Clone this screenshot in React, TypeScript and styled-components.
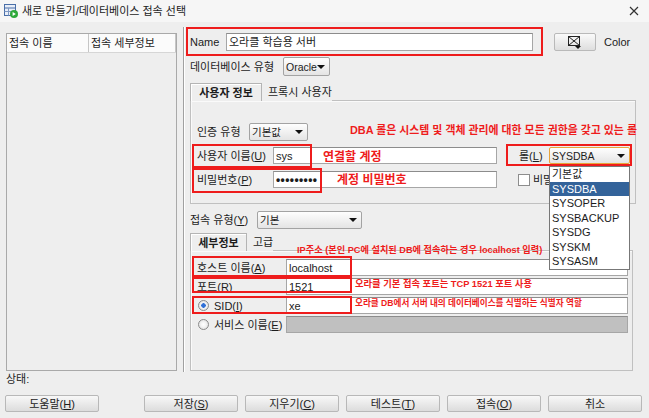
import styled, { createGlobalStyle } from "styled-components";

const FONT = `"Liberation Sans", "Noto Sans CJK KR", sans-serif`;
const RED = "#ee1c1c";

const GlobalStyle = createGlobalStyle`
  html, body {
    margin: 0;
    padding: 0;
    background: #eeeeee;
  }
  body {
    font-family: ${FONT};
    font-size: 11px;
    color: #1c1c1c;
  }
  * {
    box-sizing: border-box;
  }
`;

const Window = styled.div`
  position: relative;
  width: 649px;
  height: 418px;
  overflow: hidden;
  background: #eeeeee;
  display: flex;
  flex-direction: column;
`;

const TitleBar = styled.div`
  height: 22px;
  display: flex;
  align-items: center;
  padding: 0 10px 0 4px;
  background: #f6f6f6;
`;

const TitleText = styled.span`
  margin-left: 4px;
  line-height: 12px;
  flex: 1;
`;

const Body = styled.div`
  display: flex;
  height: 350px;
`;

const LeftCol = styled.div`
  width: 183px;
  padding: 11px 6px 1px 6px;
  display: flex;
`;

const ConnTable = styled.div`
  flex: 1;
  border: 1px solid #a9a9a9;
  background: #eeeeee;
`;

const TableHead = styled.div`
  height: 19px;
  display: grid;
  grid-template-columns: 82px 1fr;
  background: #fbfbfb;
  border-bottom: 1px solid #d6d6d6;
`;

const HeadCell = styled.div`
  display: flex;
  align-items: center;
  padding-left: 2px;
  border-right: 1px solid #c6c6c6;
  line-height: 12px;
`;

const Separator = styled.div`
  width: 2px;
  margin-top: 5px;
  border-left: 1px solid #a0a0a0;
  border-right: 1px solid #ffffff;
`;

const RightCol = styled.div`
  flex: 1;
  padding: 5px 0 0 1px;
  display: flex;
  flex-direction: column;
`;

const NameRow = styled.div`
  display: flex;
  align-items: center;
`;

const NameBox = styled.div`
  width: 357px;
  height: 29px;
  border: 2px solid ${RED};
  display: flex;
  align-items: center;
  padding-left: 2px;
`;

const Label = styled.span<{ $w?: number }>`
  width: ${(p) => (p.$w ? `${p.$w}px` : "auto")};
  flex-shrink: 0;
  line-height: 12px;
  white-space: nowrap;
`;

const TextInput = styled.div<{ $w: number; $h?: number; $disabled?: boolean }>`
  width: ${(p) => p.$w}px;
  height: ${(p) => p.$h ?? 17}px;
  background: ${(p) => (p.$disabled ? "#c0c0c0" : "#ffffff")};
  border: 1px solid #a6a6a6;
  border-top-color: #8c8c8c;
  display: flex;
  align-items: center;
  padding-left: 2px;
  line-height: 12px;
  font-size: 11px;
  white-space: nowrap;
  overflow: hidden;
`;

const ColorButton = styled.div`
  width: 42px;
  height: 18px;
  margin-left: 11px;
  border: 1px solid #b9b9b9;
  border-radius: 2px;
  background: linear-gradient(#fafafa, #dedede);
  display: flex;
  align-items: center;
  justify-content: center;
`;

const ColorText = styled.span`
  margin-left: 8px;
  line-height: 12px;
`;

const FieldRow = styled.div<{ $mt: number; $h?: number; $pl?: number }>`
  display: flex;
  align-items: center;
  margin-top: ${(p) => p.$mt}px;
  height: ${(p) => p.$h ?? 18}px;
  padding-left: ${(p) => p.$pl ?? 0}px;
`;

const Select = styled.div<{ $w: number; $h?: number; $focus?: boolean }>`
  position: relative;
  width: ${(p) => p.$w}px;
  height: ${(p) => p.$h ?? 18}px;
  border: 1px solid ${(p) => (p.$focus ? "#e8a43a" : "#a3a3a3")};
  border-radius: 2px;
  background: linear-gradient(#fefefe, #e4e4e4);
  display: flex;
  align-items: center;
  padding-left: 2px;
  line-height: 12px;
  font-size: 10.5px;

  &::after {
    content: "";
    position: absolute;
    right: 4px;
    top: 50%;
    margin-top: -2px;
    border-left: 4px solid transparent;
    border-right: 4px solid transparent;
    border-top: 4px solid #111;
  }
`;

const TabStrip = styled.div<{ $mt: number }>`
  display: flex;
  align-items: flex-end;
  height: 18px;
  margin-top: ${(p) => p.$mt}px;
  padding-left: 4px;
`;

const Tab = styled.div<{ $active?: boolean; $w?: number }>`
  height: 18px;
  width: ${(p) => (p.$w ? `${p.$w}px` : "auto")};
  display: flex;
  align-items: center;
  justify-content: ${(p) => (p.$active ? "center" : "flex-start")};
  padding-left: ${(p) => (p.$active ? 0 : 6)}px;
  font-weight: ${(p) => (p.$active ? 700 : 400)};
  line-height: 12px;
  border: ${(p) => (p.$active ? "1px solid #b4b4b4" : "none")};
  border-bottom: none;
  box-shadow: ${(p) => (p.$active ? "inset 1px 1px #ffffff" : "none")};
  background: #eeeeee;
  margin-bottom: -1px;
  position: relative;
  z-index: 1;
`;

const TabPanel = styled.div<{ $w: number; $h: number; $pt: number }>`
  width: ${(p) => p.$w}px;
  height: ${(p) => p.$h}px;
  margin-left: 4px;
  border: 1px solid #c0c0c0;
  box-shadow: inset 1px 1px #fafafa;
  padding: ${(p) => p.$pt}px 0 0 6px;
  display: flex;
  flex-direction: column;
`;

const Dots = styled.span`
  font-size: 12px;
  font-weight: 700;
  letter-spacing: 0.4px;
`;

const CheckBox = styled.div`
  width: 12px;
  height: 12px;
  margin-left: 21px;
  border: 1px solid #8d8d8d;
  background: #ffffff;
  flex-shrink: 0;
`;

const Radio = styled.div<{ $on?: boolean }>`
  width: 11px;
  height: 11px;
  border-radius: 50%;
  border: 1px solid #8a8a8a;
  background: radial-gradient(circle, ${(p) => (p.$on ? "#2f6fd6 0 2px" : "#fff 0 0")}, #f4f4f4 2.5px, #d8d8d8);
  margin: 0 5px 0 1px;
  flex-shrink: 0;
`;

const StatusRow = styled.div`
  height: 14px;
  padding-left: 6px;
  display: flex;
  align-items: center;
  line-height: 12px;
`;

const ButtonRow = styled.div`
  display: flex;
  gap: 7px;
  margin-top: 9px;
  padding-left: 5px;
`;

const Button = styled.div<{ $gapAfter?: number }>`
  width: 94px;
  height: 17px;
  border: 1px solid #b8b8b8;
  border-radius: 2px;
  background: linear-gradient(#f8f8f8, #dcdcdc);
  display: flex;
  align-items: center;
  justify-content: center;
  line-height: 12px;
  margin-right: ${(p) => p.$gapAfter ?? 0}px;
`;

const U = styled.span`
  text-decoration: underline;
`;

const RoleList = styled.div`
  position: absolute;
  left: 549px;
  top: 166px;
  width: 81px;
  height: 104px;
  border: 1px solid #777777;
  background: #ffffff;
  z-index: 5;
`;

const RoleItem = styled.div<{ $sel?: boolean }>`
  height: 14.5px;
  line-height: 14.5px;
  padding-left: 2px;
  font-size: 11px;
  background: ${(p) => (p.$sel ? "#33639a" : "transparent")};
  color: ${(p) => (p.$sel ? "#ffffff" : "#1c1c1c")};
`;

const MarkBox = styled.div<{ $x: number; $y: number; $w: number; $h: number }>`
  position: absolute;
  left: ${(p) => p.$x}px;
  top: ${(p) => p.$y}px;
  width: ${(p) => p.$w}px;
  height: ${(p) => p.$h}px;
  border: 2px solid ${RED};
  z-index: 4;
  pointer-events: none;
`;

const MarkText = styled.div<{ $x: number; $y: number; $size: number }>`
  position: absolute;
  left: ${(p) => p.$x}px;
  top: ${(p) => p.$y}px;
  font-size: ${(p) => p.$size}px;
  line-height: ${(p) => Math.round(p.$size + 2)}px;
  font-weight: 700;
  color: ${RED};
  white-space: nowrap;
  z-index: 4;
`;

function TitleIcon() {
  return (
    <svg width="14" height="14" viewBox="0 0 14 14">
      <rect x="0.5" y="0.5" width="11" height="11" fill="#e8eef8" stroke="#4a6fa8" />
      <line x1="0.5" y1="4" x2="11.5" y2="4" stroke="#4a6fa8" />
      <line x1="0.5" y1="7.5" x2="11.5" y2="7.5" stroke="#7d97c2" />
      <line x1="4.5" y1="4" x2="4.5" y2="11.5" stroke="#7d97c2" />
      <circle cx="10" cy="10" r="4" fill="#2ea83a" />
      <path d="M8.6 7.9 L11.8 10 L8.6 12.1 Z" fill="#ffffff" />
    </svg>
  );
}

function CloseIcon() {
  return (
    <svg width="10" height="10" viewBox="0 0 10 10">
      <path d="M1 1 L9 9 M9 1 L1 9" stroke="#333" strokeWidth="1.2" />
    </svg>
  );
}

function ColorIcon() {
  return (
    <svg width="16" height="14" viewBox="0 0 16 14">
      <rect x="1.5" y="1.5" width="11" height="9" fill="none" stroke="#222" />
      <path d="M1.5 1.5 L12.5 10.5 M12.5 1.5 L1.5 10.5" stroke="#222" />
      <path d="M8 11 L14 11 L11 14 Z" fill="#111" />
    </svg>
  );
}

export default function App() {
  return (
    <>
      <GlobalStyle />
      <Window>
        <TitleBar>
          <TitleIcon />
          <TitleText>새로 만들기/데이터베이스 접속 선택</TitleText>
          <CloseIcon />
        </TitleBar>

        <Body>
          <LeftCol>
            <ConnTable>
              <TableHead>
                <HeadCell>접속 이름</HeadCell>
                <HeadCell>접속 세부정보</HeadCell>
              </TableHead>
            </ConnTable>
          </LeftCol>
          <Separator />
          <RightCol>
            <NameRow>
              <NameBox>
                <Label $w={36}>Name</Label>
                <TextInput $w={307} $h={18}>
                  오라클 학습용 서버
                </TextInput>
              </NameBox>
              <ColorButton>
                <ColorIcon />
              </ColorButton>
              <ColorText>Color</ColorText>
            </NameRow>

            <FieldRow $mt={1} $h={19} $pl={4}>
              <Label $w={93}>데이터베이스 유형</Label>
              <Select $w={47} $h={19}>
                Oracle
              </Select>
            </FieldRow>

            <TabStrip $mt={6}>
              <Tab $active $w={72}>
                사용자 정보
              </Tab>
              <Tab>프록시 사용자</Tab>
            </TabStrip>
            <TabPanel $w={446} $h={104} $pt={22}>
              <FieldRow $mt={0}>
                <Label $w={52}>인증 유형</Label>
                <Select $w={59}>기본값</Select>
              </FieldRow>
              <FieldRow $mt={6} $h={17}>
                <Label $w={76}>
                  사용자 이름(<U>U</U>)
                </Label>
                <TextInput $w={224}>sys</TextInput>
                <Label $w={30} style={{ marginLeft: 22 }}>
                  롤(<U>L</U>)
                </Label>
                <Select $w={81} $h={17} $focus>
                  SYSDBA
                </Select>
              </FieldRow>
              <FieldRow $mt={7} $h={17}>
                <Label $w={76}>
                  비밀번호(<U>P</U>)
                </Label>
                <TextInput $w={224}>
                  <Dots>•••••••••</Dots>
                </TextInput>
                <CheckBox />
                <Label style={{ marginLeft: 3 }}>비밀번호 저장</Label>
              </FieldRow>
            </TabPanel>

            <FieldRow $mt={7} $pl={4}>
              <Label $w={67}>
                접속 유형(<U>Y</U>)
              </Label>
              <Select $w={105}>기본</Select>
            </FieldRow>

            <TabStrip $mt={3}>
              <Tab $active $w={57}>
                세부정보
              </Tab>
              <Tab>고급</Tab>
            </TabStrip>
            <TabPanel $w={443} $h={121} $pt={8}>
              <FieldRow $mt={0} $h={17}>
                <Label $w={89}>
                  호스트 이름(<U>A</U>)
                </Label>
                <TextInput $w={342}>localhost</TextInput>
              </FieldRow>
              <FieldRow $mt={2} $h={17}>
                <Label $w={89}>
                  포트(<U>R</U>)
                </Label>
                <TextInput $w={342}>1521</TextInput>
              </FieldRow>
              <FieldRow $mt={2} $h={17}>
                <Radio $on />
                <Label $w={72}>
                  SID(<U>I</U>)
                </Label>
                <TextInput $w={342}>xe</TextInput>
              </FieldRow>
              <FieldRow $mt={2} $h={17}>
                <Radio />
                <Label $w={72}>
                  서비스 이름(<U>E</U>)
                </Label>
                <TextInput $w={342} $disabled />
              </FieldRow>
            </TabPanel>
          </RightCol>
        </Body>

        <StatusRow>상태:</StatusRow>
        <ButtonRow>
          <Button $gapAfter={38}>
            도움말(<U>H</U>)
          </Button>
          <Button>
            저장(<U>S</U>)
          </Button>
          <Button>
            지우기(<U>C</U>)
          </Button>
          <Button>
            테스트(<U>T</U>)
          </Button>
          <Button>
            접속(<U>O</U>)
          </Button>
          <Button>취소</Button>
        </ButtonRow>

        <RoleList>
          <RoleItem>기본값</RoleItem>
          <RoleItem $sel>SYSDBA</RoleItem>
          <RoleItem>SYSOPER</RoleItem>
          <RoleItem>SYSBACKUP</RoleItem>
          <RoleItem>SYSDG</RoleItem>
          <RoleItem>SYSKM</RoleItem>
          <RoleItem>SYSASM</RoleItem>
        </RoleList>

        <MarkBox $x={192} $y={144} $w={120} $h={24} />
        <MarkBox $x={192} $y={168} $w={130} $h={25} />
        <MarkBox $x={506} $y={144} $w={126} $h={22} />
        <MarkBox $x={192} $y={256} $w={160} $h={21} />
        <MarkBox $x={192} $y={277} $w={160} $h={16} />
        <MarkBox $x={192} $y={296} $w={160} $h={18} />

        <MarkText $x={350} $y={124} $size={10.9}>
          DBA 롤은 시스템 및 객체 관리에 대한 모든 권한을 갖고 있는 롤
        </MarkText>
        <MarkText $x={323} $y={150} $size={12}>
          연결할 계정
        </MarkText>
        <MarkText $x={337} $y={173} $size={12}>
          계정 비밀번호
        </MarkText>
        <MarkText $x={297} $y={245} $size={9.2}>
          IP주소 (본인 PC에 설치된 DB에 접속하는 경우 localhost 입력)
        </MarkText>
        <MarkText $x={355} $y={279} $size={9.3}>
          오라클 기본 접속 포트는 TCP 1521 포트 사용
        </MarkText>
        <MarkText $x={355} $y={298} $size={8.6}>
          오라클 DB에서 서버 내의 데이터베이스를 식별하는 식별자 역할
        </MarkText>
      </Window>
    </>
  );
}
